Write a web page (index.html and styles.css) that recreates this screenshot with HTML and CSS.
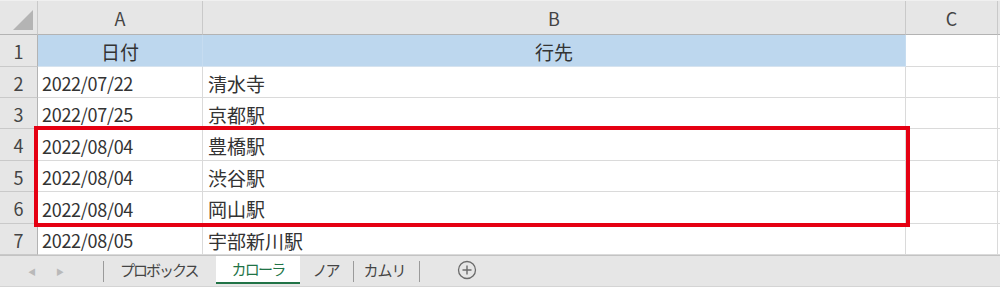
FILE: index.html
```html
<!DOCTYPE html>
<html lang="ja">
<head>
  <meta charset="UTF-8">
  <title>行先一覧</title>
  <link rel="stylesheet" href="styles.css">
</head>
<body>
  <div class="sheet">
    <div class="grid">
      <div class="corner"><span class="tri"></span></div>
      <div class="colhead">A</div>
      <div class="colhead">B</div>
      <div class="colhead">C</div>
      <div class="colhead edge"></div>

      <div class="rowhead">1</div>
      <div class="cell title">日付</div>
      <div class="cell title">行先</div>
      <div class="cell"></div>
      <div class="cell edge"></div>

      <div class="rowhead">2</div>
      <div class="cell">2022/07/22</div>
      <div class="cell place">清水寺</div>
      <div class="cell"></div>
      <div class="cell edge"></div>

      <div class="rowhead">3</div>
      <div class="cell">2022/07/25</div>
      <div class="cell place">京都駅</div>
      <div class="cell"></div>
      <div class="cell edge"></div>

      <div class="rowhead">4</div>
      <div class="cell">2022/08/04</div>
      <div class="cell place">豊橋駅</div>
      <div class="cell"></div>
      <div class="cell edge"></div>

      <div class="rowhead">5</div>
      <div class="cell">2022/08/04</div>
      <div class="cell place">渋谷駅</div>
      <div class="cell"></div>
      <div class="cell edge"></div>

      <div class="rowhead">6</div>
      <div class="cell">2022/08/04</div>
      <div class="cell place">岡山駅</div>
      <div class="cell"></div>
      <div class="cell edge"></div>

      <div class="rowhead">7</div>
      <div class="cell">2022/08/05</div>
      <div class="cell place">宇部新川駅</div>
      <div class="cell"></div>
      <div class="cell edge"></div>
    </div>

    <!-- red frame around rows 4-6 -->
    <div class="highlight"></div>

    <div class="tabs">
      <span class="arrow">&#9664;</span>
      <span class="arrow">&#9654;</span>
      <span class="sep first"></span>
      <span class="tab">プロボックス</span>
      <span class="tab active">カローラ</span>
      <span class="tab noa">ノア</span>
      <span class="sep"></span>
      <span class="tab camry">カムリ</span>
      <span class="sep"></span>
      <span class="add">
        <svg width="20" height="20" viewBox="0 0 20 20">
          <circle cx="10" cy="10" r="8.5" fill="none" stroke="#6b6b6b" stroke-width="1.3"/>
          <path d="M10 5.5v9M5.5 10h9" stroke="#6b6b6b" stroke-width="1.4"/>
        </svg>
      </span>
    </div>
  </div>
</body>
</html>
```

FILE: styles.css
```css
body {
  margin: 0;
  background-color: #ffffff;
  font-family: "Noto Sans CJK JP", "Noto Sans", sans-serif;
  color: #333333;
}

.sheet {
  position: relative;
  width: 1000px;
  height: 287px;
  overflow: hidden;
}

.grid {
  display: grid;
  grid-template-columns: 38px 165px 703px 92px 2px;
  grid-template-rows: 34px 32px 31px 31px 32px 31px 32px 31px;
  border-top: 1px solid #f0f0f0;
}

.corner,
.colhead,
.rowhead {
  box-sizing: border-box;
  background-color: #e6e6e6;
  border-right: 1px solid #c9c9c9;
  border-bottom: 1px solid #c9c9c9;
  color: #444444;
  font-size: 18px;
  display: flex;
  align-items: center;
  justify-content: center;
}

.colhead {
  border-bottom: 1px solid #b3b3b3;
}

.corner {
  position: relative;
  border-bottom: 1px solid #b3b3b3;
}

.tri {
  position: absolute;
  right: 4px;
  bottom: 4px;
  width: 0;
  height: 0;
  border-left: 20px solid transparent;
  border-bottom: 20px solid #b4b4b4;
}

.rowhead {
  border-right: 1px solid #b3b3b3;
  padding-top: 1px;
}

.cell {
  box-sizing: border-box;
  border-right: 1px solid #dadada;
  border-bottom: 1px solid #dadada;
  font-size: 18px;
  letter-spacing: -0.3px;
  padding: 2px 0 0 4px;
  display: flex;
  align-items: center;
  white-space: nowrap;
}

.cell.place {
  font-size: 19px;
  padding-left: 5px;
  letter-spacing: 0;
}

.cell.title {
  font-size: 19px;
  background-color: #bdd7ee;
  border-right-color: #c6dcf0;
  border-bottom-color: #d6e3ef;
  justify-content: center;
  padding-left: 0;
  letter-spacing: 0;
}

.edge {
  border-right: none;
}

.highlight {
  position: absolute;
  left: 34px;
  top: 126px;
  width: 868px;
  height: 93px;
  border: 4px solid #e50012;
}

.tabs {
  box-sizing: border-box;
  height: 33px;
  background-color: #e6e6e6;
  border-top: 1px solid #c3c3c3;
  border-bottom: 2px solid #d4d4d4;
  display: flex;
  align-items: stretch;
  font-size: 15px;
  color: #444444;
}

.arrow {
  display: flex;
  align-items: center;
  font-size: 8px;
  color: #b9b9b9;
  width: 28px;
  justify-content: center;
}

.arrow:first-child {
  margin-left: 18px;
}

.sep {
  width: 1px;
  background-color: #9a9a9a;
  margin: 5px 0 4px;
}

.sep.first {
  margin-left: 29px;
}

.tab {
  display: flex;
  align-items: center;
  padding: 0 18px 3px 16px;
  letter-spacing: -2px;
}

.tab.active {
  background-color: #ffffff;
  color: #217346;
  border-bottom: 2px solid #217346;
  margin-bottom: 2px;
  padding: 0 16px 1px 16px;
  letter-spacing: -1.8px;
}

.tab.noa {
  padding: 0 15px 3px 12px;
}

.tab.camry {
  padding: 0 14px 3px 9px;
  letter-spacing: -1px;
}

.add {
  display: flex;
  align-items: center;
  margin-left: 37px;
  padding-bottom: 2px;
}
```
